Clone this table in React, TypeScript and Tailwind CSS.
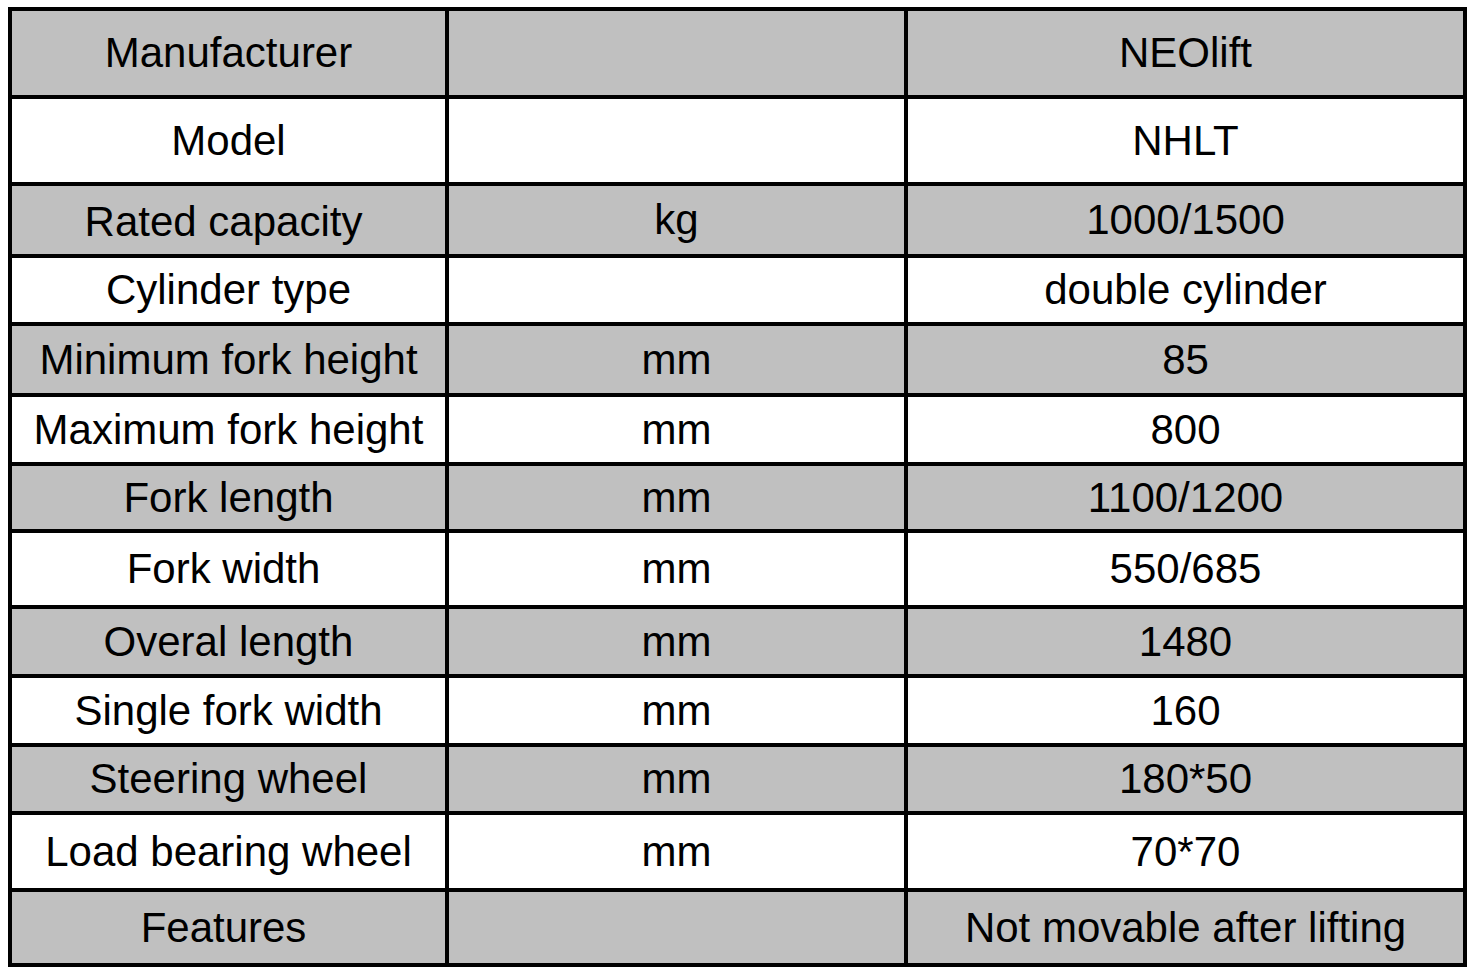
import React from "react";

type Row = { label: string; unit: string; value: string; h: string; shift?: string };

const rows: Row[] = [
  { label: "Manufacturer", unit: "", value: "NEOlift", h: "h-[84px]" },
  { label: "Model", unit: "", value: "NHLT", h: "h-[83px]" },
  { label: "Rated capacity", unit: "kg", value: "1000/1500", h: "h-[68px]", shift: "pr-[10px] pt-[3px]" },
  { label: "Cylinder type", unit: "", value: "double cylinder", h: "h-[64px]" },
  { label: "Minimum fork height", unit: "mm", value: "85", h: "h-[67px]" },
  { label: "Maximum fork height", unit: "mm", value: "800", h: "h-[65px]" },
  { label: "Fork length", unit: "mm", value: "1100/1200", h: "h-[63px]" },
  { label: "Fork width", unit: "mm", value: "550/685", h: "h-[72px]", shift: "pr-[10px]" },
  { label: "Overal length", unit: "mm", value: "1480", h: "h-[65px]" },
  { label: "Single fork width", unit: "mm", value: "160", h: "h-[65px]" },
  { label: "Steering wheel", unit: "mm", value: "180*50", h: "h-[64px]" },
  { label: "Load bearing wheel", unit: "mm", value: "70*70", h: "h-[73px]" },
  { label: "Features", unit: "", value: "Not movable after lifting", h: "h-[71px]", shift: "pr-[10px]" },
];

export default function App() {
  return (
    <div className="w-[1475px] h-[976px] bg-white pt-[7px] pl-[8px]" style={{ fontFamily: '"Liberation Sans", Arial, sans-serif' }}>
      <div className="w-[1459px] bg-black p-[4px] grid grid-cols-[433px_455px_555px] gap-[4px]">
        {rows.map((r, i) => {
          const bg = i % 2 === 0 ? "bg-[#c0c0c0]" : "bg-white";
          return (
            <React.Fragment key={i}>
              <div className={`${r.h} ${bg} ${r.shift ?? ""} flex items-center justify-center text-[42px] leading-none text-black whitespace-nowrap`}>
                {r.label}
              </div>
              <div className={`${r.h} ${bg} flex items-center justify-center text-[42px] leading-none text-black whitespace-nowrap`}>
                {r.unit}
              </div>
              <div className={`${r.h} ${bg} flex items-center justify-center text-[42px] leading-none text-black whitespace-nowrap`}>
                {r.value}
              </div>
            </React.Fragment>
          );
        })}
      </div>
    </div>
  );
}
